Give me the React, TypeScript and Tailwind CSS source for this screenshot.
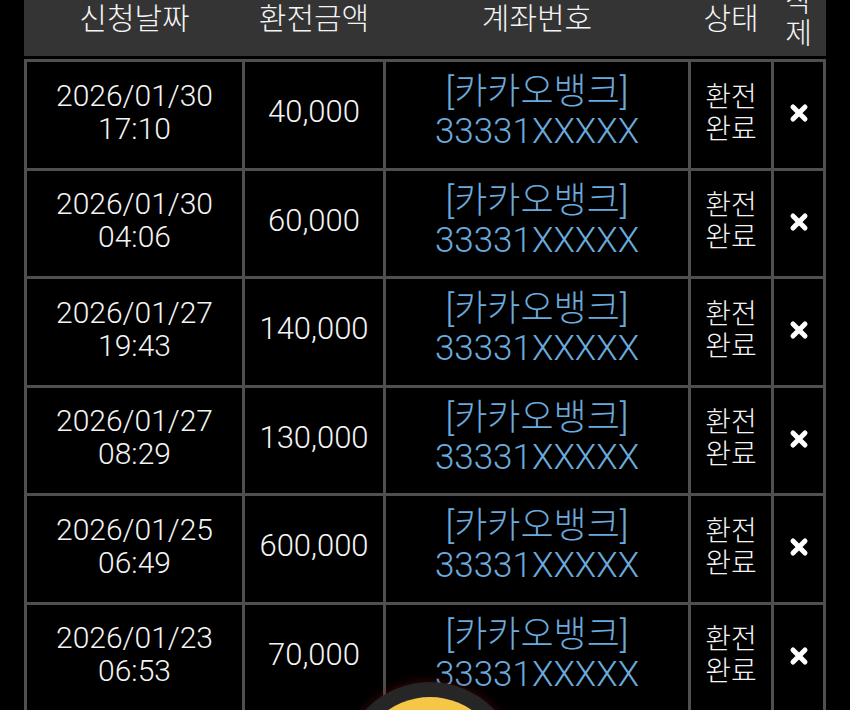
import React from 'react';

const rows = [
    { date: '2026/01/30', time: '17:10', amount: '40,000' },
    { date: '2026/01/30', time: '04:06', amount: '60,000' },
    { date: '2026/01/27', time: '19:43', amount: '140,000' },
    { date: '2026/01/27', time: '08:29', amount: '130,000' },
    { date: '2026/01/25', time: '06:49', amount: '600,000' },
    { date: '2026/01/23', time: '06:53', amount: '70,000' },
];

const cols = 'grid grid-cols-[215px_138px_302px_80px_49px] gap-[3px] px-[3px]';

function CloseIcon() {
    return (
        <svg width="20" height="20" viewBox="0 0 20 20">
            <path d="M4 4 L16 16 M16 4 L4 16" stroke="#ffffff" strokeWidth="5" strokeLinecap="round" />
        </svg>
    );
}

export default function App() {
    return (
        <div
            className="relative h-[710px] w-[850px] overflow-hidden bg-black font-light text-[#f4f4f4]"
            style={{ fontFamily: 'Roboto, "Noto Sans CJK KR", sans-serif' }}
        >
            <div className="mx-[24px] w-[802px]">
                {/* Header */}
                <div className={`${cols} -mt-[20px] h-[76px] items-center bg-[#343434] text-[30px] leading-[31px]`}>
                    <div className="text-center">신청날짜</div>
                    <div className="text-center">환전금액</div>
                    <div className="text-center">계좌번호</div>
                    <div className="text-center">상태</div>
                    <div className="flex flex-col items-center gap-[1px] text-[29px] leading-[31px]">
                        <span>삭</span>
                        <span>제</span>
                    </div>
                </div>

                {/* Body */}
                <div className={`${cols} mt-[3px] auto-rows-[105.5px] bg-[#4f4f4f] py-[3px]`}>
                    {rows.map((r, i) => (
                        <React.Fragment key={i}>
                            <div className="flex flex-col items-center justify-center bg-black pb-[6px] text-[30px] leading-[33px]">
                                <span>{r.date}</span>
                                <span>{r.time}</span>
                            </div>
                            <div className="flex items-center justify-center bg-black pb-[5px] text-[31px]">{r.amount}</div>
                            <div className="flex flex-col items-center justify-center bg-black pb-[5px] text-[#6aaadd]">
                                <span className="text-[36px] leading-[39px]">[카카오뱅크]</span>
                                <span className="text-[35px] leading-[39px]">33331XXXXX</span>
                            </div>
                            <div className="flex flex-col items-center justify-center bg-black pb-[2px] text-[28px] leading-[32px]">
                                <span>환전</span>
                                <span>완료</span>
                            </div>
                            <div className="flex items-center justify-center bg-black pb-[3px]">
                                <CloseIcon />
                            </div>
                        </React.Fragment>
                    ))}
                </div>
            </div>

            {/* Floating button */}
            <div className="absolute left-[342px] top-[682px] flex h-[176px] w-[176px] items-center justify-center rounded-full bg-[#262626] shadow-[0_0_12px_rgba(120,20,20,0.5)]">
                <div className="h-[146px] w-[146px] rounded-full bg-[#f6c646]" />
            </div>
        </div>
    );
}
